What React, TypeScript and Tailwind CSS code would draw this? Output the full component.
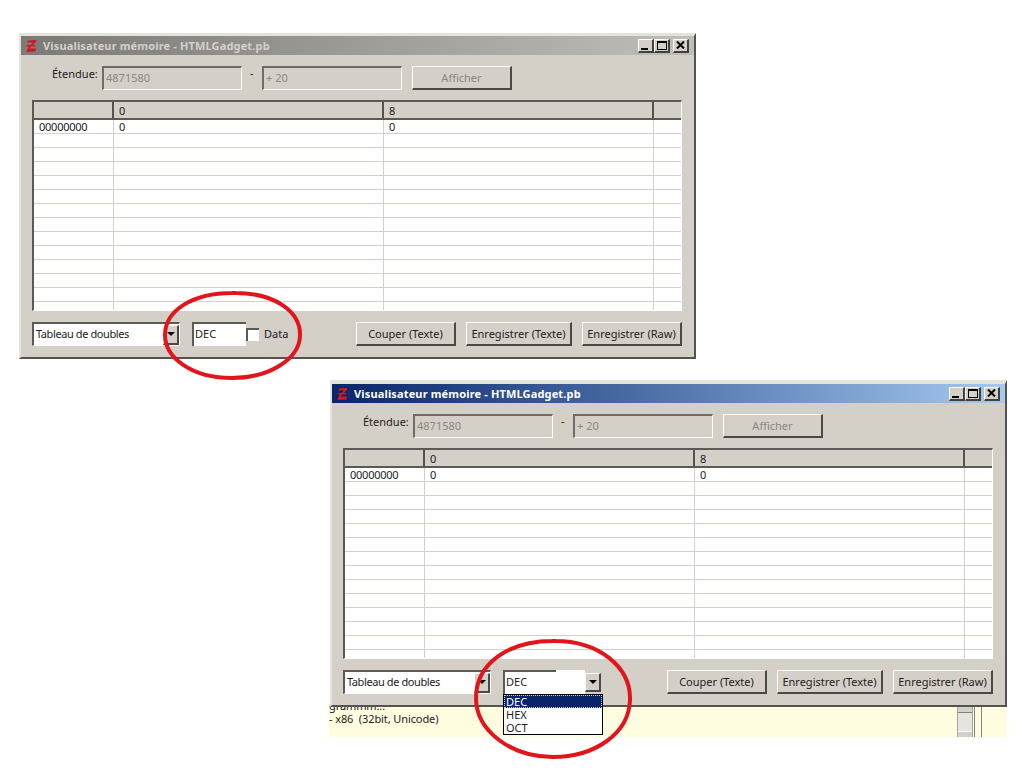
const font = { fontFamily: '"Noto Sans", Tahoma, sans-serif' };

const ROWS = Array.from({ length: 14 }, (_, i) => i);

function ZLogo() {
  return (
    <svg width="11" height="14" viewBox="0 0 11 14" className="shrink-0">
      <path d="M2 1.5 L10.5 1 L10 3 L6.5 6 L9.5 6 L8.8 7.5 L5 7.5 L3.5 9.5 L10 9.5 L9.5 12.5 L0.5 13 L1 11 L3 7.5 L0.5 7.5 L1 6 L4.5 6 L7 3.5 L1.5 3.5 Z" fill="#d9141c" />
    </svg>
  );
}

function TitleButton({ kind }: { kind: "min" | "max" | "close" }) {
  return (
    <div className="flex h-[14px] w-[16px] items-center justify-center border-t border-l border-t-white border-l-white border-r-2 border-b-2 border-r-[#404040] border-b-[#404040] bg-[#d4d0c8]">
      {kind === "min" && <div className="mt-[7px] -ml-[2px] h-[2px] w-[7px] bg-black" />}
      {kind === "max" && <div className="h-[9px] w-[10px] border border-t-2 border-black" />}
      {kind === "close" && (
        <svg width="9" height="8" viewBox="0 0 9 8">
          <path d="M1 0.5 L8 7.5 M8 0.5 L1 7.5" stroke="#000" strokeWidth="2" />
        </svg>
      )}
    </div>
  );
}

function Field({ value, className }: { value: string; className: string }) {
  return (
    <div className={`flex h-6 items-center border-t-2 border-l-2 border-r border-b border-t-[#6e6c68] border-l-[#6e6c68] border-r-white border-b-white bg-[#d4d0c8] pb-[3px] pl-[2px] text-[#8b8984] ${className}`}>
      {value}
    </div>
  );
}

function PushButton({ label, className, disabled }: { label: string; className: string; disabled?: boolean }) {
  return (
    <div className={`flex h-6 items-center justify-center border-t border-l border-t-white border-l-white border-r-2 border-b-2 border-r-[#4a4945] border-b-[#4a4945] bg-[#d4d0c8] ${disabled ? "text-[#8b8984]" : "text-[#222]"} ${className}`}>
      {label}
    </div>
  );
}

function ArrowButton({ className }: { className: string }) {
  return (
    <div className={`flex items-center justify-center border-t border-l border-t-white border-l-white border-r-2 border-b-2 border-r-[#4a4945] border-b-[#4a4945] bg-[#d4d0c8] ${className}`}>
      <div className="h-0 w-0 border-x-4 border-t-4 border-x-transparent border-t-black" />
    </div>
  );
}

function HeaderCell({ label, className }: { label?: string; className: string }) {
  return <div className={`flex h-4 items-center border-r-2 border-r-[#55534f] pl-[5px] ${className}`}>{label}</div>;
}

function MemoryTable() {
  return (
    <div className="mt-[10px] mr-[12px] ml-[11px] h-[211px] overflow-hidden border-t-2 border-l-2 border-r border-b border-t-[#5c5a56] border-l-[#5c5a56] border-r-white border-b-white bg-white">
      <div className="flex border-b-2 border-b-[#5c5a56] bg-[#d4d0c8]">
        <HeaderCell className="w-[80px]" />
        <HeaderCell label="0" className="w-[270px]" />
        <HeaderCell label="8" className="w-[270px]" />
        <div className="flex-1" />
      </div>
      {ROWS.map((row) => (
        <div key={row} className="flex h-[14px] items-center border-b border-b-[#d4d0c8]">
          <div className="flex h-full w-[80px] items-center border-r border-r-[#d4d0c8] pb-[1px] pl-[5px] tracking-[-0.25px]">{row === 0 && "00000000"}</div>
          <div className="flex h-full w-[270px] items-center border-r border-r-[#d4d0c8] pb-[1px] pl-[5px]">{row === 0 && "0"}</div>
          <div className="flex h-full w-[270px] items-center border-r border-r-[#d4d0c8] pb-[1px] pl-[5px]">{row === 0 && "0"}</div>
        </div>
      ))}
    </div>
  );
}

function TypeSelect() {
  return (
    <div className="flex h-6 w-[148px] items-center border-t-2 border-l-2 border-r border-b border-t-[#5c5a56] border-l-[#5c5a56] border-r-white border-b-white bg-white pl-[2px]">
      <span className="flex-1 pb-[3px] tracking-[-0.4px]">Tableau de doubles</span>
      <ArrowButton className="h-[20px] w-[16px]" />
    </div>
  );
}

function MemoryWindow({
  className,
  active,
  children,
}: {
  className: string;
  active?: boolean;
  children: React.ReactNode;
}) {
  return (
    <div className={`absolute flex w-[677px] flex-col border-r-2 border-b-2 border-l-2 border-r-[#55534f] border-b-[#55534f] border-t-[#e6e3dc] border-l-[#e6e3dc] bg-[#d4d0c8] text-[11px] leading-none text-[#222] ${active ? "border-t-4" : "border-t-[3px]"} ${className}`}>
      <div className={`flex h-[19px] items-center pl-[5px] pr-[5px] ${active ? "bg-gradient-to-r from-[#0a246a] to-[#a6caf0]" : "bg-gradient-to-r from-[#7c7a78] to-[#c0beb9]"}`}>
        <ZLogo />
        <span className={`ml-[6px] flex-1 text-[11px] font-bold tracking-[0.15px] ${active ? "text-white" : "text-[#d4d0c8]"}`}>
          Visualisateur mémoire - HTMLGadget.pb
        </span>
        <TitleButton kind="min" />
        <TitleButton kind="max" />
        <div className="ml-[3px]">
          <TitleButton kind="close" />
        </div>
      </div>

      <div className="mt-[11px] flex items-start">
        <span className="ml-[31px] mt-[2px] w-[50px]">Étendue:</span>
        <Field value="4871580" className="w-[140px]" />
        <span className="ml-[8px] mt-[1px] w-[12px]">-</span>
        <Field value="+ 20" className="w-[140px]" />
        <PushButton label="Afficher" disabled className="ml-[10px] w-[100px]" />
      </div>

      <MemoryTable />

      <div className="mt-[11px] mr-[12px] mb-[11px] ml-[11px] flex h-6 items-center">{children}</div>
    </div>
  );
}

function BottomButtons() {
  return (
    <div className="ml-auto flex gap-[10px]">
      <PushButton label="Couper (Texte)" className="w-[100px]" />
      <PushButton label="Enregistrer (Texte)" className="w-[106px]" />
      <PushButton label="Enregistrer (Raw)" className="w-[100px]" />
    </div>
  );
}

export default function App() {
  return (
    <div className="relative h-[768px] w-[1024px] overflow-hidden bg-white" style={font}>
      {/* console behind the second window */}
      <div className="absolute left-[329px] top-[699px] h-[38px] w-[678px] bg-[#fffde0] text-[11px] leading-[13px] tracking-[-0.1px] text-[#222]">
        <div>grammm...</div>
        <div>- x86 &nbsp;(32bit, Unicode)</div>
        <div className="absolute left-[628px] top-0 flex h-full w-[16px] flex-col border-x border-[#a8a6a0]">
          <div className="h-[14px] border-b border-b-[#808080] bg-[#d4d0c8]" />
          <div className="h-[18px] bg-[#e6e4de]" />
          <div className="flex-1 border-t border-t-white bg-[#d4d0c8]" />
        </div>
        <div className="absolute left-[645px] top-0 h-full w-[8px] border-x border-[#888680]" />
      </div>

      <MemoryWindow className="left-[19px] top-[33px]">
        <TypeSelect />
        <div className="ml-[12px] flex h-6 w-[54px] items-center border-t-2 border-l-2 border-t-[#5c5a56] border-l-[#5c5a56] bg-white pb-[3px] pl-[1px]">DEC</div>
        <div className="h-[13px] w-[13px] border-t-2 border-l-2 border-t-[#5c5a56] border-l-[#5c5a56] bg-white" />
        <span className="ml-[5px] pb-[1px]">Data</span>
        <BottomButtons />
      </MemoryWindow>

      <MemoryWindow className="left-[330px] top-[380px]" active>
        <TypeSelect />
        <div className="ml-[12px] flex h-6 items-center">
          <div className="flex h-6 w-[82px] flex-col border-l-2 border-l-[#5c5a56] bg-white">
            <div className="h-[2px] w-[51px] bg-[#5c5a56]" />
            <div className="flex flex-1 items-center pb-[3px] pl-[1px]">DEC</div>
          </div>
          <ArrowButton className="h-[19px] w-[16px]" />
        </div>
        <BottomButtons />
      </MemoryWindow>

      {/* open combo list */}
      <div className="absolute left-[503px] top-[694px] flex h-[41px] w-[100px] flex-col border border-black bg-white text-[11px] leading-[13px] text-[#222]">
        <div className="flex h-[13px] items-center border border-dotted border-[#d4d0c8] bg-[#0a246a] pl-[1px] text-white">DEC</div>
        <div className="h-[13px] pl-[2px]">HEX</div>
        <div className="h-[13px] pl-[2px]">OCT</div>
      </div>

      {/* hand drawn circles */}
      <svg className="pointer-events-none absolute inset-0" width="1024" height="768" fill="none" stroke="#e2141c" strokeWidth="4">
        <path d="M232 293 C275 292 301 312 300 336 C299 360 268 378 232 378 C192 378 165 358 165 335 C165 311 192 292 236 293" />
        <path d="M552 641 C600 640 631 668 630 700 C629 734 594 757 553 757 C510 757 476 730 476 698 C476 664 508 640 556 641" />
      </svg>
    </div>
  );
}
